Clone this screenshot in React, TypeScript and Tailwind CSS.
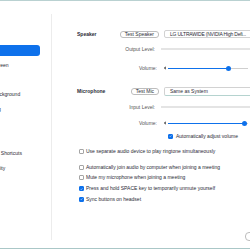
import React from "react";

const menu = [
  "General",
  "Video",
  "Audio",
  "Share Screen",
  "Chat",
  "Virtual Background",
  "Recording",
  "Profile",
  "Statistics",
  "Keyboard Shortcuts",
  "Accessibility",
];

function SpeakerIcon({ loud = false }: { loud?: boolean }) {
  return (
    <svg width={loud ? 4 : 3} height="4" viewBox={loud ? "0 0 8 8" : "0 0 6 8"} className="shrink-0">
      <path d="M0 2.5h1.5L4 0.5v7L1.5 5.5H0z" fill="#6b6b6b" />
      {loud && <path d="M5.5 2.2q1.2 1.8 0 3.6" stroke="#6b6b6b" strokeWidth="0.8" fill="none" />}
    </svg>
  );
}

function Slider({ pct }: { pct: number }) {
  return (
    <div className="ml-[5px] flex items-center shrink-0">
      <SpeakerIcon />
      <div className="ml-[1px] w-[80px] h-[1px] bg-[#cfcfcf] relative">
        <div className="h-full bg-[#0e71eb]" style={{ width: `${pct}%` }} />
        <div
          className="absolute top-[-2px] w-[5px] h-[5px] ml-[-2.5px] rounded-full bg-[#0e71eb]"
          style={{ left: `${pct}%` }}
        />
      </div>
      <div className="ml-[2px]">
        <SpeakerIcon loud />
      </div>
    </div>
  );
}

function Checkbox({ checked }: { checked?: boolean }) {
  return (
    <span
      className={`w-[5px] h-[5px] shrink-0 rounded-[1px] border flex items-center justify-center ${
        checked ? "bg-[#0e71eb] border-[#0e71eb]" : "bg-white border-[#a5a5a5]"
      }`}
    >
      {checked && (
        <svg width="4" height="4" viewBox="0 0 8 8">
          <path d="M1.5 4.2l1.8 1.8 3.4-3.8" stroke="white" strokeWidth="1.2" fill="none" />
        </svg>
      )}
    </span>
  );
}

const options = [
  { label: "Automatically join audio by computer when joining a meeting", checked: false },
  { label: "Mute my microphone when joining a meeting", checked: false },
  { label: "Press and hold SPACE key to temporarily unmute yourself", checked: true },
  { label: "Sync buttons on headset", checked: true },
];

export default function App() {
  return (
    <div className="w-[250px] h-[250px] overflow-hidden bg-white flex flex-col text-[5px] leading-none text-[#2a2a35] font-['Liberation_Sans',Arial,sans-serif]">
      <div className="h-px bg-[#b9d1d1] shrink-0" />
      <div className="flex flex-1 min-h-0">
        {/* Sidebar */}
        <div className="w-[52px] shrink-0 overflow-hidden border-r border-[#ececec] mt-[13px] mb-[8px]">
          <div className="ml-[-30px] w-[70px] flex flex-col">
            {menu.map((item) => (
              <div key={item} className="h-[14.7px] flex items-center">
                <div
                  className={`h-[11px] w-full flex items-center gap-[1px] pl-[2px] rounded-[3px] ${
                    item === "Audio" ? "bg-[#0e71eb] text-white" : "text-[#2a2a35]"
                  }`}
                >
                  <span className="w-[5px] h-[5px] shrink-0 rounded-[1px] border border-current opacity-60" />
                  <span className="whitespace-nowrap">{item}</span>
                </div>
              </div>
            ))}
          </div>
        </div>

        {/* Audio settings */}
        <div className="flex-1 min-w-0 flex flex-col pl-[25px]">
          <div className="flex items-center h-[8px] mt-[29px]">
            <div className="w-[42px] shrink-0 font-bold">Speaker</div>
            <div className="w-[40px] shrink-0 flex justify-end">
              <button className="h-[7px] px-[4px] border border-[#bdbdbd] rounded-[3px] whitespace-nowrap leading-none">
                Test Speaker
              </button>
            </div>
            <div className="ml-[5px] shrink-0 w-[95px] h-[8px] border border-[#d2d2d2] rounded-[2px] pl-[5px] flex items-center whitespace-nowrap tracking-[-0.2px]">
              LG ULTRAWIDE (NVIDIA High Defi...
            </div>
          </div>

          <div className="flex items-center h-[8px] mt-[7px]">
            <div className="w-[82px] shrink-0 text-right pr-[4px] text-[#555]">Output Level:</div>
            <div className="ml-[2px] w-[100px] h-[1.5px] bg-[#e4e4e4] shrink-0" />
          </div>

          <div className="flex items-center h-[8px] mt-[11px]">
            <div className="w-[82px] shrink-0 text-right pr-[2px] text-[#555]">Volume:</div>
            <Slider pct={76} />
          </div>

          <div className="flex items-center h-[8px] mt-[15px]">
            <div className="w-[42px] shrink-0 font-bold">Microphone</div>
            <div className="w-[40px] shrink-0 flex justify-end">
              <button className="h-[7px] px-[4px] border border-[#bdbdbd] rounded-[3px] whitespace-nowrap leading-none">
                Test Mic
              </button>
            </div>
            <div className="ml-[5px] shrink-0 w-[95px] h-[9px] border border-[#d2d2d2] border-b-[#b5d3cf] rounded-[2px] pl-[5px] flex items-center whitespace-nowrap">
              Same as System
            </div>
          </div>

          <div className="flex items-center h-[8px] mt-[8px]">
            <div className="w-[82px] shrink-0 text-right pr-[4px] text-[#555]">Input Level:</div>
            <div className="ml-[2px] w-[100px] h-[1.5px] bg-[#e4e4e4] shrink-0" />
          </div>

          <div className="flex items-center h-[8px] mt-[8px]">
            <div className="w-[82px] shrink-0 text-right pr-[2px] text-[#555]">Volume:</div>
            <Slider pct={95} />
          </div>

          <div className="flex items-center gap-[3px] h-[8px] mt-[5px] ml-[91px]">
            <Checkbox checked />
            <span className="whitespace-nowrap">Automatically adjust volume</span>
          </div>

          <div className="flex items-center gap-[2px] h-[10.7px] mt-[6.6px] ml-[2px]">
            <Checkbox />
            <span className="whitespace-nowrap">Use separate audio device to play ringtone simultaneously</span>
          </div>

          <div className="flex flex-col mt-[4.6px] ml-[2px]">
            {options.map((o) => (
              <div key={o.label} className="flex items-center gap-[2px] h-[10.7px]">
                <Checkbox checked={o.checked} />
                <span className="whitespace-nowrap">{o.label}</span>
              </div>
            ))}
          </div>

          <div className="flex mt-[27px] ml-[168px]">
            <button className="shrink-0 w-[40px] h-[9px] border border-[#bdbdbd] rounded-[4px]">Advanced</button>
          </div>
        </div>
      </div>
      <div className="h-px bg-[#aac7c7] shrink-0" />
      <div className="h-px bg-white shrink-0" />
    </div>
  );
}
